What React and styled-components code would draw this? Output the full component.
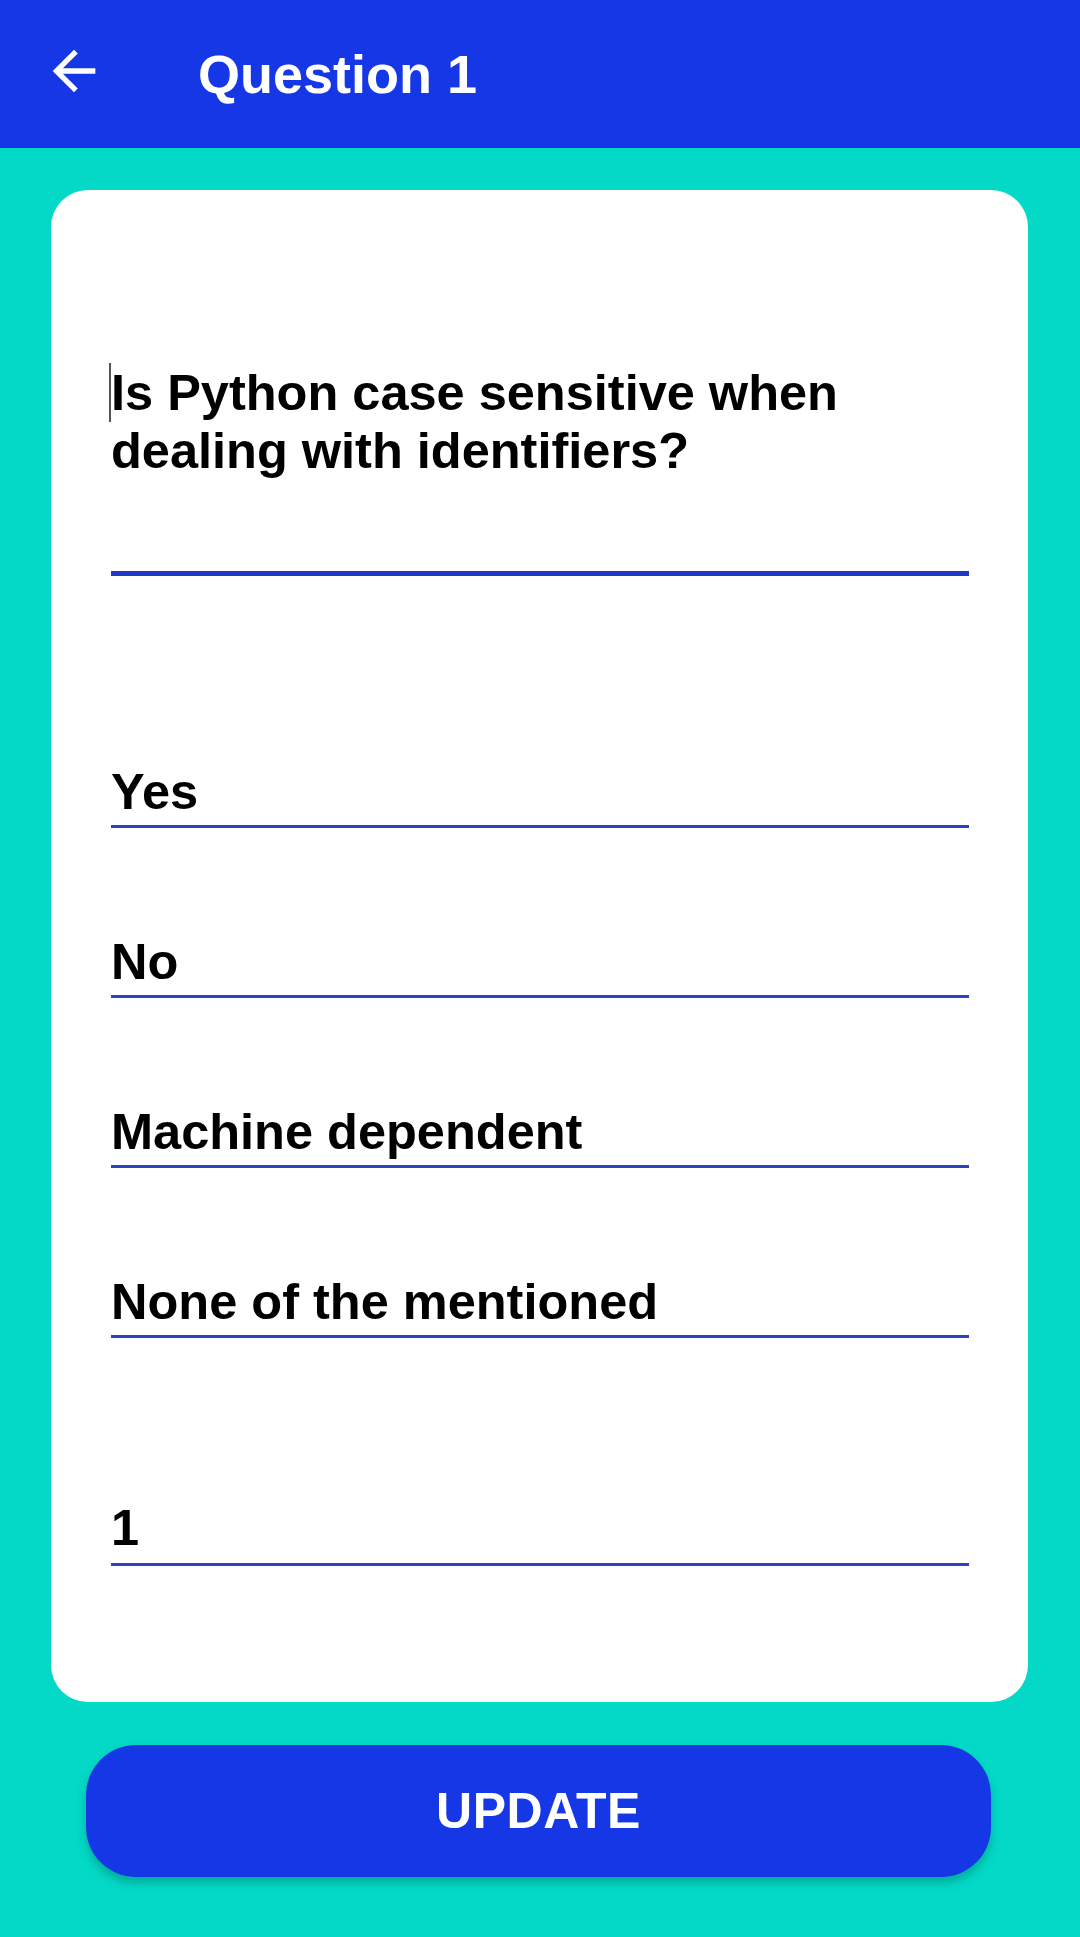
import styled, { createGlobalStyle } from 'styled-components'

const GlobalStyle = createGlobalStyle`
  html, body {
    margin: 0;
    padding: 0;
    background: #03d9c6;
  }
  * {
    box-sizing: border-box;
  }
`

const Page = styled.div`
  min-height: 1937px;
  background: #03d9c6;
  font-family: 'Liberation Sans', Arial, sans-serif;
  display: flex;
  flex-direction: column;
`

const TopBar = styled.header`
  height: 148px;
  background: #1637e6;
  display: flex;
  align-items: center;
  padding-left: 42px;
  color: #fff;
`

const BackIcon = styled.svg`
  width: 64px;
  height: 64px;
  margin-bottom: 6px;
  fill: #fff;
  flex-shrink: 0;
`

const Title = styled.h1`
  margin: 0 0 0 92px;
  font-size: 54px;
  line-height: 1;
  font-weight: 700;
  color: #fff;
`

const Content = styled.main`
  padding: 42px 52px 0 51px;
  display: flex;
  flex-direction: column;
`

const Card = styled.section`
  background: #fff;
  border-radius: 37px;
  padding: 173px 59px 136px 60px;
  display: flex;
  flex-direction: column;
`

const Field = styled.div`
  margin-top: ${(p) => p.$gap || 0}px;
  padding-bottom: ${(p) => p.$pad}px;
  border-bottom: ${(p) => p.$line}px solid ${(p) => p.$color};
`

const FieldText = styled.div`
  font-size: 50.5px;
  line-height: 57px;
  font-weight: 700;
  color: #000;
`

const Caret = styled.span`
  display: inline-block;
  width: 2px;
  height: 59px;
  margin-left: -2px;
  background: #555;
  vertical-align: -12px;
`

const UpdateButton = styled.button`
  margin: 43px 37px 0 35px;
  height: 132px;
  border: none;
  border-radius: 50px;
  background: #1637e6;
  color: #fff;
  font-family: 'Liberation Sans', Arial, sans-serif;
  font-weight: 700;
  font-size: 50px;
  letter-spacing: 0.5px;
  padding-left: 6px;
  box-shadow: 0 6px 8px rgba(0, 90, 80, 0.35);
  cursor: pointer;
`

const options = ['Yes', 'No', 'Machine dependent', 'None of the mentioned']

export default function App() {
  return (
    <>
      <GlobalStyle />
      <Page>
        <TopBar>
          <BackIcon viewBox="0 0 24 24">
            <path d="M20 11H7.83l5.59-5.59L12 4l-8 8 8 8 1.41-1.41L7.83 13H20v-2z" />
          </BackIcon>
          <Title>Question 1</Title>
        </TopBar>
        <Content>
          <Card>
            <Field $pad={92} $line={5} $color="#2338c6">
              <FieldText>
                <Caret />
                Is Python case sensitive when dealing with identifiers?
              </FieldText>
            </Field>
            {options.map((text, i) => (
              <Field
                key={text}
                $gap={i === 0 ? 187 : 105}
                $pad={5}
                $line={3}
                $color="#2d42c0"
              >
                <FieldText>{text}</FieldText>
              </Field>
            ))}
            <Field $gap={161} $pad={7} $line={3} $color="#2d42c0">
              <FieldText>1</FieldText>
            </Field>
          </Card>
          <UpdateButton>UPDATE</UpdateButton>
        </Content>
      </Page>
    </>
  )
}
